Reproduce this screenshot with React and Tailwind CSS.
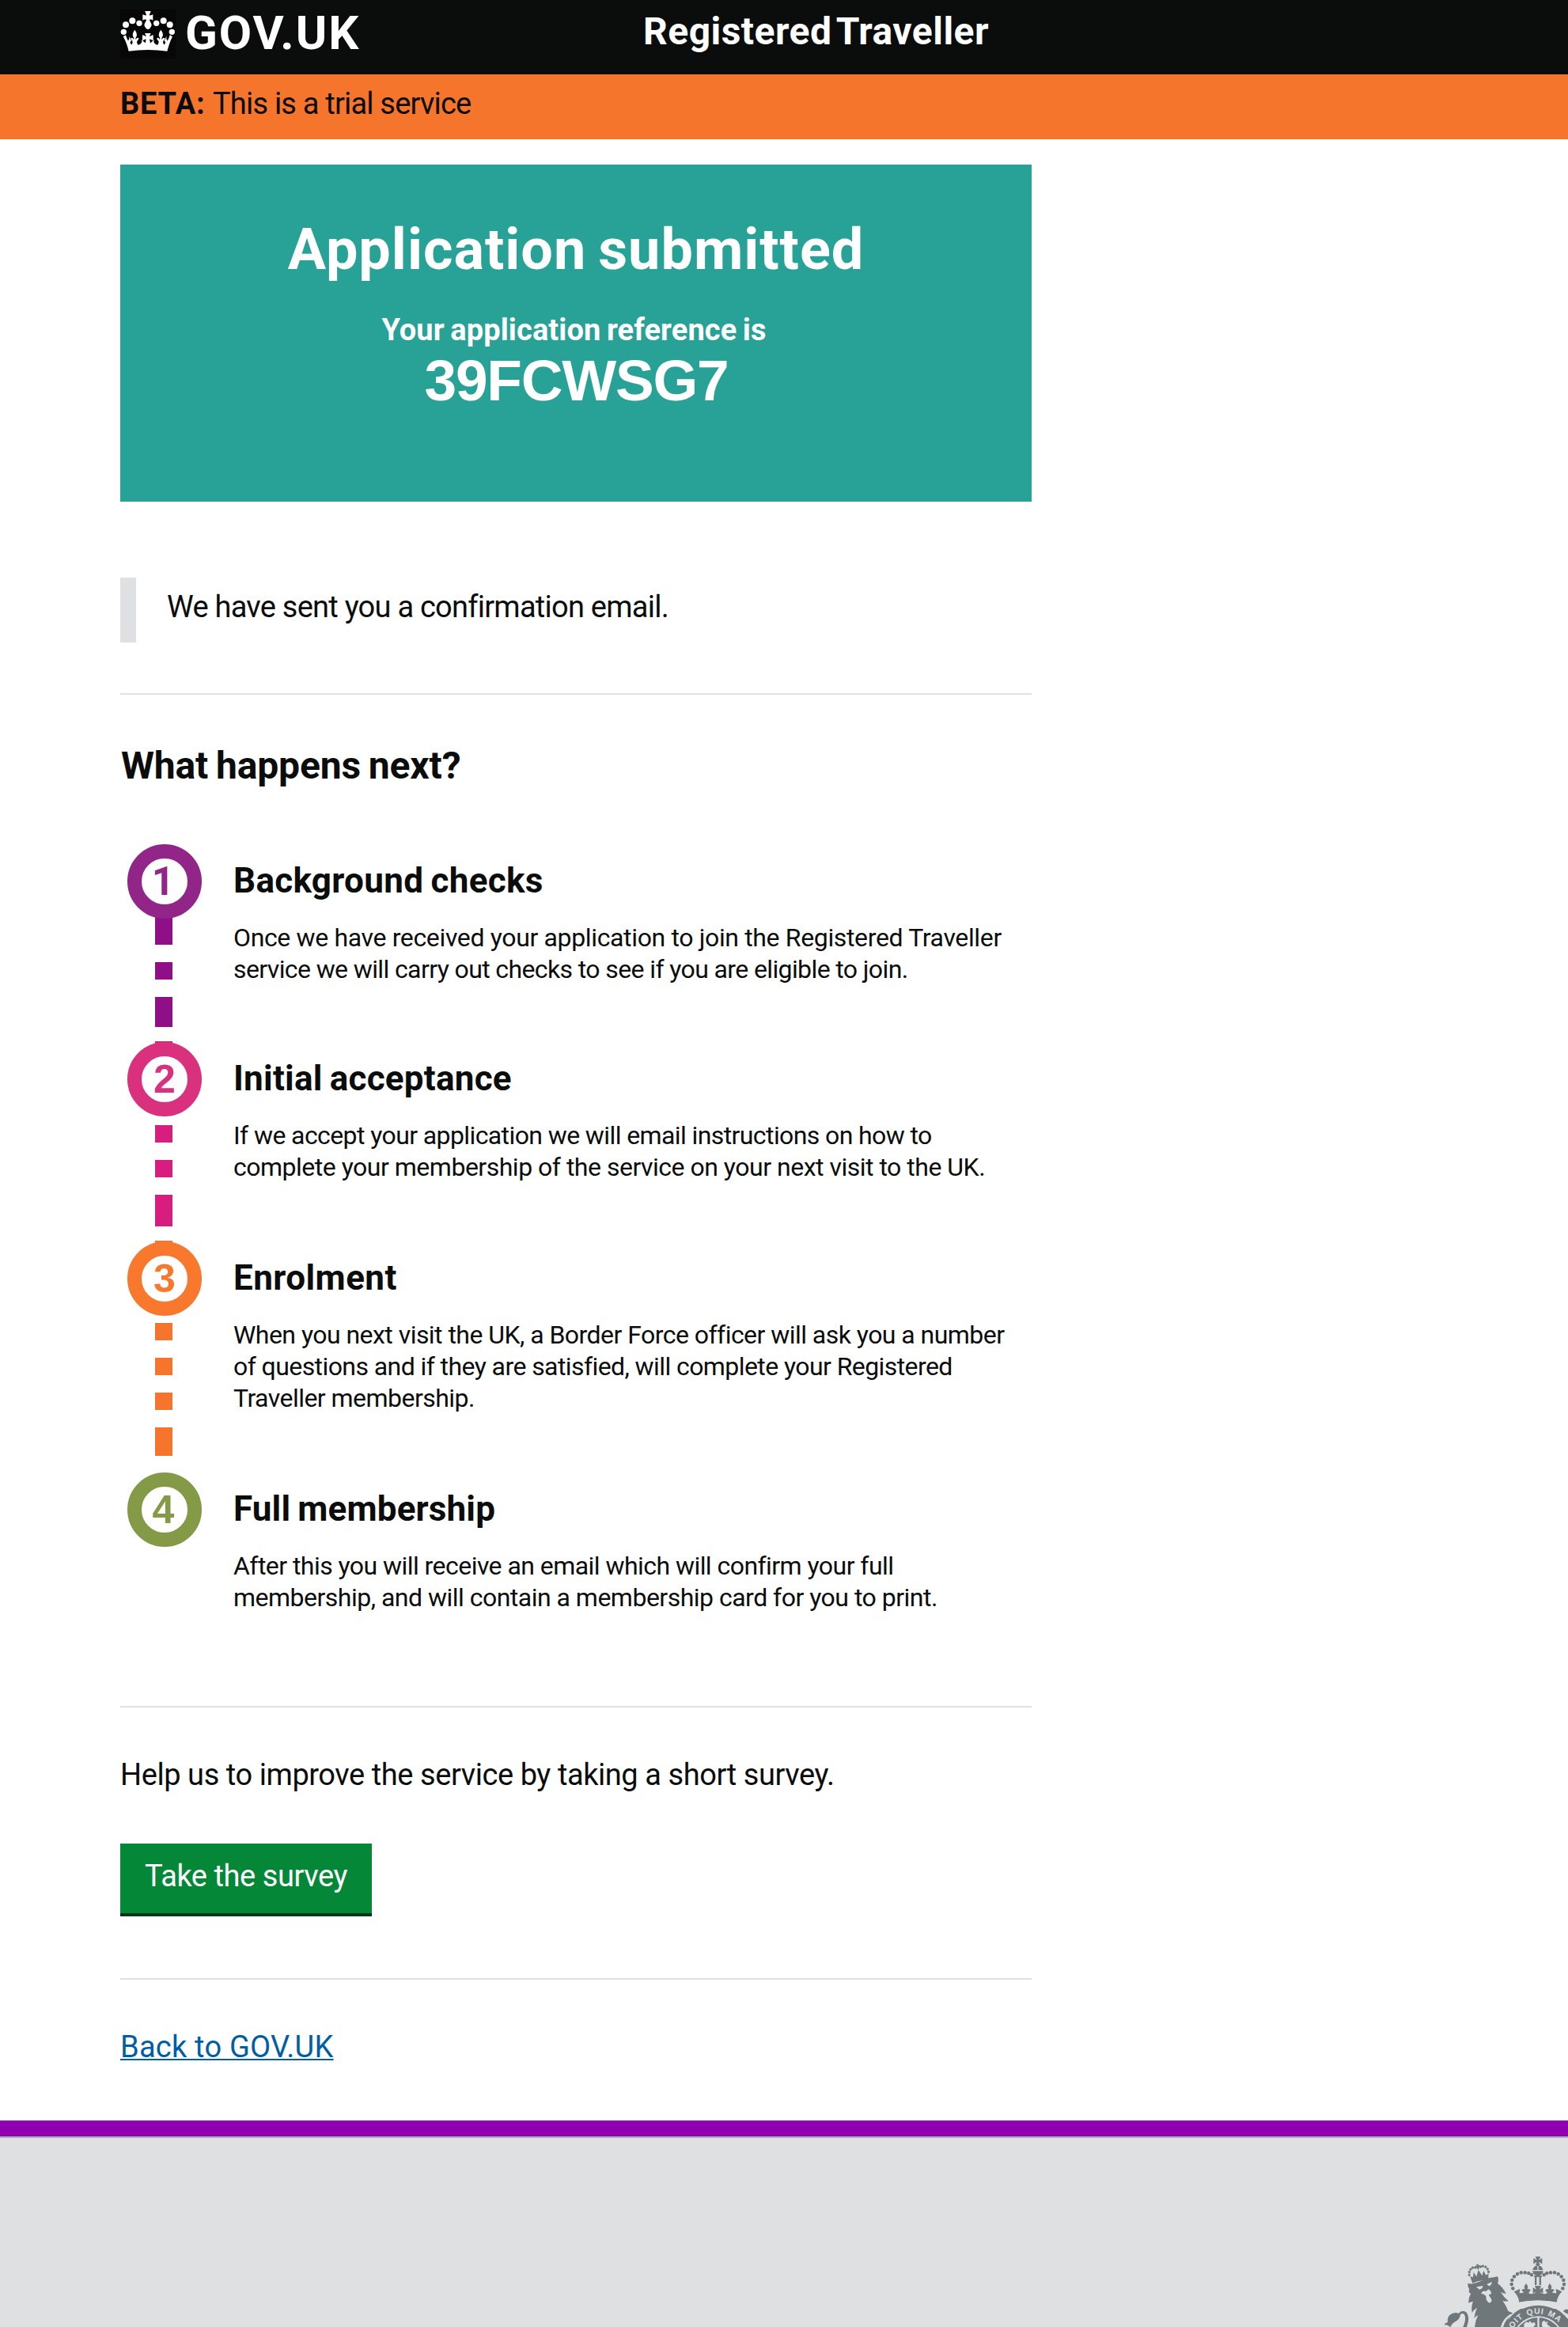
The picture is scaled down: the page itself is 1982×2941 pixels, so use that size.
import React from "react";

const WHITE = "#ffffff";
const CREST = "#6f777b";
const PALE = "#dee0e2";

function CrownFleur({ x }) {
  return (
    <g transform={`translate(${x} 0)`}>
      <path d="M0 113 Q-9 124 -8 133 Q-7 139 -3 145 L-4 150 Q-9 140 -15 145 Q-16 153 -9 155 L-8 162 L-14 173 L14 173 L8 162 L9 155 Q16 153 15 145 Q9 140 4 150 L3 145 Q7 139 8 133 Q9 124 0 113Z" />
    </g>
  );
}

function Crown() {
  return (
    <svg className="mt-[12px] h-[62px] w-[70px] bg-[#070707]" viewBox="66 36 210 186" fill={WHITE}>
      {[
        [79, 121, 11],
        [87, 94, 12],
        [112, 79, 12],
        [138, 88, 11],
        [203, 88, 11],
        [230, 79, 12],
        [254, 94, 12],
        [262, 121, 11],
      ].map(([x, y, r]) => (
        <circle key={x} cx={x} cy={y} r={r} />
      ))}
      <path d="M160 42 H182 L176 58 Q184 59 190 55 V77 Q182 72 177 74 Q177 79 182 86 Q186 92 184 99 Q180 108 171 112 Q162 108 158 99 Q156 92 160 86 Q165 79 165 74 Q158 72 151 77 V55 Q158 59 165 58Z" />
      <path d="M77 139 L87 133 Q90 146 96 155 Q102 149 100 137 L108 155 L103 160 Q104 168 113 171 H130 Q142 170 147 161 Q149 156 146 150 L166 167 H176 L195 150 Q192 156 194 161 Q199 170 211 171 H228 Q237 168 238 160 L233 155 L241 137 Q239 149 245 155 Q251 146 254 133 L264 139 Q253 160 244 194 Q170 184 98 194 Q90 160 77 139Z" />
      <CrownFleur x={121} />
      <CrownFleur x={220} />
      <path d="M159 126 H182 L176 139 L191 132 V154 L177 148 L181 170 H160 L164 148 L150 154 V132 L165 139Z" />
    </svg>
  );
}

function RoyalCrest() {
  return (
    <svg className="h-[111px] w-[180px]" viewBox="0 0 540 333" fill={CREST}>
      {/* small crown worn by the lion */}
      <g transform="rotate(-9 202 135)">
        {[
          [166, 130],
          [168, 119],
          [174, 110],
          [183, 105],
          [193, 106],
          [213, 106],
          [222, 105],
          [232, 110],
          [238, 119],
          [240, 130],
        ].map(([x, y]) => (
          <circle key={x} cx={x} cy={y} r="4.8" />
        ))}
        <path d="M198 95 H208 L206 101 L212 99 V109 L206 107 V114 H200 V107 L194 109 V99 L200 101Z" />
        <path d="M168 136 L178 141 L184 122 L192 140 L203 117 L214 140 L222 122 L228 141 L239 136 L233 163 Q202 154 173 163Z" />
      </g>
      {/* lion */}
      <path d="M160 167 Q175 172 190 166 Q215 158 240 147 Q258 146 273 141 Q279 154 273 168 Q292 180 305 207 Q294 205 285 200 Q296 220 314 235 Q302 237 292 233 Q306 252 313 272 Q322 278 330 279 Q312 296 304 333 H186 Q188 310 199 288 Q188 292 184 300 Q187 278 195 260 Q182 268 176 279 Q172 255 180 236 Q170 238 163 242 Q162 222 172 207 Q160 203 166 190 Q159 180 160 167Z" />
      <path d="M192 181 L218 177 Q215 189 204 191Z M232 171 L251 162 Q252 174 240 178Z" fill={PALE} />
      <path d="M211 207 Q216 193 229 198 L238 190 Q250 196 249 209 Q242 205 240 213 Q250 225 251 234 Q246 244 238 240 Q229 233 229 217 Q222 207 211 207Z" fill={PALE} />
      {/* tail */}
      <path d="M70 324 Q76 316 84 315 Q80 295 96 284 Q110 276 125 281 Q140 266 154 277 Q170 293 156 333 H142 Q156 302 147 286 Q140 278 132 286 Q130 304 112 313 Q99 320 94 333 Q84 324 70 324Z" />
      {/* imperial crown */}
      <path d="M416 66 H436 L429 79 L442 72 V94 L429 86 L434 99 H417 L422 86 L409 94 V72 L422 79Z" />
      <path d="M423 98 h6 v4 h-6z M406 117 Q410 101 424 100 V117Z M428 100 Q442 101 445 117 H428Z M405 121 H446 Q445 133 432 138 H419 Q407 133 405 121Z" />
      <path d="M414 141 h7 v33 h-7z M431 141 h7 v33 h-7z M411 138 h30 v5 h-30z" />
      {[
        [402, 135],
        [391, 129],
        [377, 127],
        [362, 127],
        [348, 132],
        [336, 142],
        [328, 155],
        [326, 171],
        [331, 187],
      ].map(([x, y]) => (
        <g key={x + y}>
          <circle cx={x} cy={y} r="6.8" />
          <circle cx={851 - x} cy={y} r="6.8" />
        </g>
      ))}
      <path d="M335 199 L358 188 L356 205 Q366 205 373 202 L364 194 Q367 186 376 190 L374 179 L381 167 L388 179 L386 190 Q395 186 398 194 L390 203 Q400 212 414 205 L419 198 L407 207 V183 L420 191 L414 177 H438 L432 191 L445 183 V207 L433 198 L438 205 Q452 212 462 203 L454 194 Q457 186 466 190 L464 179 L471 167 L478 179 L476 190 Q485 186 488 194 L479 202 Q486 205 496 205 L494 188 L517 199 Q500 215 497 239 Q427 226 355 239 Q352 215 335 199Z" />
      {/* garter */}
      <circle cx="427" cy="391" r="143" />
      <path d="M352 254 Q350 240 366 237 Q427 228 486 237 Q503 240 500 254 Q498 267 484 263 Q427 239 370 263 Q355 267 352 254Z" fill={PALE} />
      <circle cx="427" cy="391" r="99" fill={PALE} />
      <circle cx="427" cy="391" r="94" />
      <path d="M424 296 h7 v37 h-7z" fill={PALE} />
      <path d="M373 322 l9-9 8 4 5-7 7 8 10-3 5 8-8 10h-36z M443 333 q-7-22 8-25 l3 7 10-3 -4 10 14 11z" fill={PALE} />
      <path d="M321 284 Q292 303 285 333 H294 Q302 303 328 287Z" fill={PALE} />
      <path d="M522 273 Q531 263 540 267 V284 Q530 282 522 273Z" />
      <path id="garter-arc" d="M319 391 A108 108 0 0 1 535 391" fill="none" />
      <text fontFamily="Liberation Sans, sans-serif" fontWeight="700" fontSize="31" fill={PALE} letterSpacing="2.5" wordSpacing="4">
        <textPath href="#garter-arc" startOffset="53">
          OIT QUI MA
        </textPath>
      </text>
    </svg>
  );
}

function Bar({ className }) {
  return <div className={`ml-[44px] w-[22px] ${className}`} />;
}

function Rule({ className }) {
  return <div className={`h-[2px] w-[1152px] bg-[#dee0e2] ${className}`} />;
}

function Step({ number, numberClass, circle, height, stub, bars, title, titleClass, lines }) {
  return (
    <li className={`flex ${height}`}>
      <div className="w-[143px] shrink-0">
        <div className="relative ml-[9px] h-[94px] w-[94px]">
          {stub && <div className={`absolute -top-px left-[35px] h-2 w-[22px] ${stub}`} />}
          <div className={`relative z-10 flex h-[94px] w-[94px] justify-center rounded-full border-[18px] bg-white ${circle}`}>
            <span className={`text-[50px] leading-[58px] font-bold ${numberClass}`}>{number}</span>
          </div>
        </div>
        {bars}
      </div>
      <div className="pt-5 whitespace-nowrap">
        <h3 className={`text-[44px] leading-[52px] font-bold [word-spacing:-2px] ${titleClass}`}>{title}</h3>
        <p className="mt-[26px] text-[32px] leading-[40px]">
          {lines.map(([text, tracking]) => (
            <span key={text} className={`block ${tracking}`}>
              {text}
            </span>
          ))}
        </p>
      </div>
    </li>
  );
}

export default function App() {
  return (
    <div className="h-[2941px] overflow-hidden bg-white font-['Roboto',sans-serif] whitespace-nowrap text-[#0b0c0c]">
      <header className="flex h-[94px] items-start bg-[#0b0c0c] pl-[152px] text-white">
        <div className="flex w-[661px] items-start">
          <Crown />
          <span className="mt-[12px] ml-3 text-[60px] leading-[60px] font-bold tracking-[1.95px]">GOV.UK</span>
        </div>
        <span className="mt-[10px] text-[48px] leading-[60px] font-bold tracking-[0.48px] [word-spacing:-6px]">Registered Traveller</span>
      </header>

      <div className="flex h-[82px] bg-[#f5752d] pt-[13px] pl-[152px] text-[38px] leading-[48px]">
        <strong className="w-[117px] font-bold tracking-[0.73px]">BETA:</strong>
        <span className="tracking-[-0.8px]">This is a trial service</span>
      </div>

      <main className="pl-[152px]">
        <section className="mt-8 flex h-[426px] w-[1152px] flex-col items-center bg-[#28a197] pt-[68px] text-white">
          <h1 className="text-[72px] leading-[80px] font-bold tracking-[0.98px] [word-spacing:-4px]">Application submitted</h1>
          <p className="mt-[37px] pr-[5px] text-[38px] leading-[48px] font-bold tracking-[0.1px] [word-spacing:-2px]">Your application reference is</p>
          <p className="mt-1 pl-px font-['Liberation_Sans'] text-[73px] leading-[72px] font-bold tracking-[-1.2px]">39FCWSG7</p>
        </section>

        <div className="mt-24 h-[82px] border-l-[20px] border-[#dee0e2] pt-[13px] pl-[39px] text-[38px] leading-[48px] tracking-[-0.75px]">
          We have sent you a confirmation email.
        </div>
        <Rule className="mt-16" />

        <h2 className="mt-[60px] pl-px text-[48px] leading-[60px] font-bold tracking-[-0.15px] [word-spacing:-2px]">What happens next?</h2>

        <ol className="mt-[69px]">
          <Step
            number="1"
            numberClass="mr-[4px] text-[#912688]"
            circle="border-[#912688]"
            height="h-[250px]"
            bars={
              <>
                <Bar className="-mt-1 h-[37px] bg-[#8f0f87]" />
                <Bar className="mt-[22px] h-[22px] bg-[#8f0f87]" />
                <Bar className="mt-[22px] h-[38px] bg-[#8f0f87]" />
              </>
            }
            title="Background checks"
            titleClass="tracking-[0.31px]"
            lines={[
              ["Once we have received your application to join the Registered Traveller", "tracking-[-0.356px]"],
              ["service we will carry out checks to see if you are eligible to join.", "tracking-[-0.615px]"],
            ]}
          />
          <Step
            number="2"
            numberClass="font-['Liberation_Sans'] text-[#da317f]"
            circle="border-[#da317f]"
            height="h-[252px]"
            stub="bg-[#d71e7f]"
            bars={
              <>
                <Bar className="mt-[11px] h-[22px] bg-[#d71e7f]" />
                <Bar className="mt-[22px] h-[22px] bg-[#d71e7f]" />
                <Bar className="mt-[22px] h-[40px] bg-[#d71e7f]" />
              </>
            }
            title="Initial acceptance"
            titleClass="tracking-[0.24px]"
            lines={[
              ["If we accept your application we will email instructions on how to", "tracking-[-0.6px]"],
              ["complete your membership of the service on your next visit to the UK.", "tracking-[-0.495px]"],
            ]}
          />
          <Step
            number="3"
            numberClass="font-['Liberation_Sans'] text-[#f8782d]"
            circle="border-[#f8782d]"
            height="h-[292px]"
            stub="bg-[#f5752d]"
            bars={
              <>
                <Bar className="mt-[9px] h-[22px] bg-[#f5752d]" />
                <Bar className="mt-[22px] h-[22px] bg-[#f5752d]" />
                <Bar className="mt-[22px] h-[22px] bg-[#f5752d]" />
                <Bar className="mt-[22px] h-[36px] bg-[#f5752d]" />
              </>
            }
            title="Enrolment"
            titleClass="tracking-[0.45px]"
            lines={[
              ["When you next visit the UK, a Border Force officer will ask you a number", "tracking-[-0.54px]"],
              ["of questions and if they are satisfied, will complete your Registered", "tracking-[-0.58px]"],
              ["Traveller membership.", "tracking-[-0.533px]"],
            ]}
          />
          <Step
            number="4"
            numberClass="mr-[3px] font-['Liberation_Sans'] text-[#859a47]"
            circle="border-[#859a47]"
            height="h-[178px]"
            title="Full membership"
            titleClass="tracking-[0.15px]"
            lines={[
              ["After this you will receive an email which will confirm your full", "tracking-[-0.55px]"],
              ["membership, and will contain a membership card for you to print.", "tracking-[-0.51px]"],
            ]}
          />
        </ol>

        <Rule className="mt-[117px]" />
        <p className="mt-[61px] text-[38px] leading-[48px] tracking-[-0.43px]">
          Help us to improve the service by taking a short survey.
        </p>
        <button className="mt-[63px] flex h-[92px] w-[318px] items-start border-b-4 border-[#003418] bg-[#048737] pt-[17px] pl-[31px] text-[38px] leading-[48px] tracking-[-0.43px] text-white">
          Take the survey
        </button>
        <Rule className="mt-[78px]" />
        <div className="mt-[61px] h-[48px] text-[38px] leading-[48px] tracking-[0.24px]">
          <a
            href="#"
            className="text-[#005ea5] underline decoration-2 underline-offset-2 [text-decoration-skip-ink:none]"
          >
            Back to GOV.UK
          </a>
        </div>
      </main>

      <footer className="mt-[69px] h-[261px] border-t-[20px] border-[#9100b0] bg-[#dee0e2]">
        <div className="flex h-[241px] items-end justify-end border-t-2 border-[#a1acb2]">
          <RoyalCrest />
        </div>
      </footer>
    </div>
  );
}
